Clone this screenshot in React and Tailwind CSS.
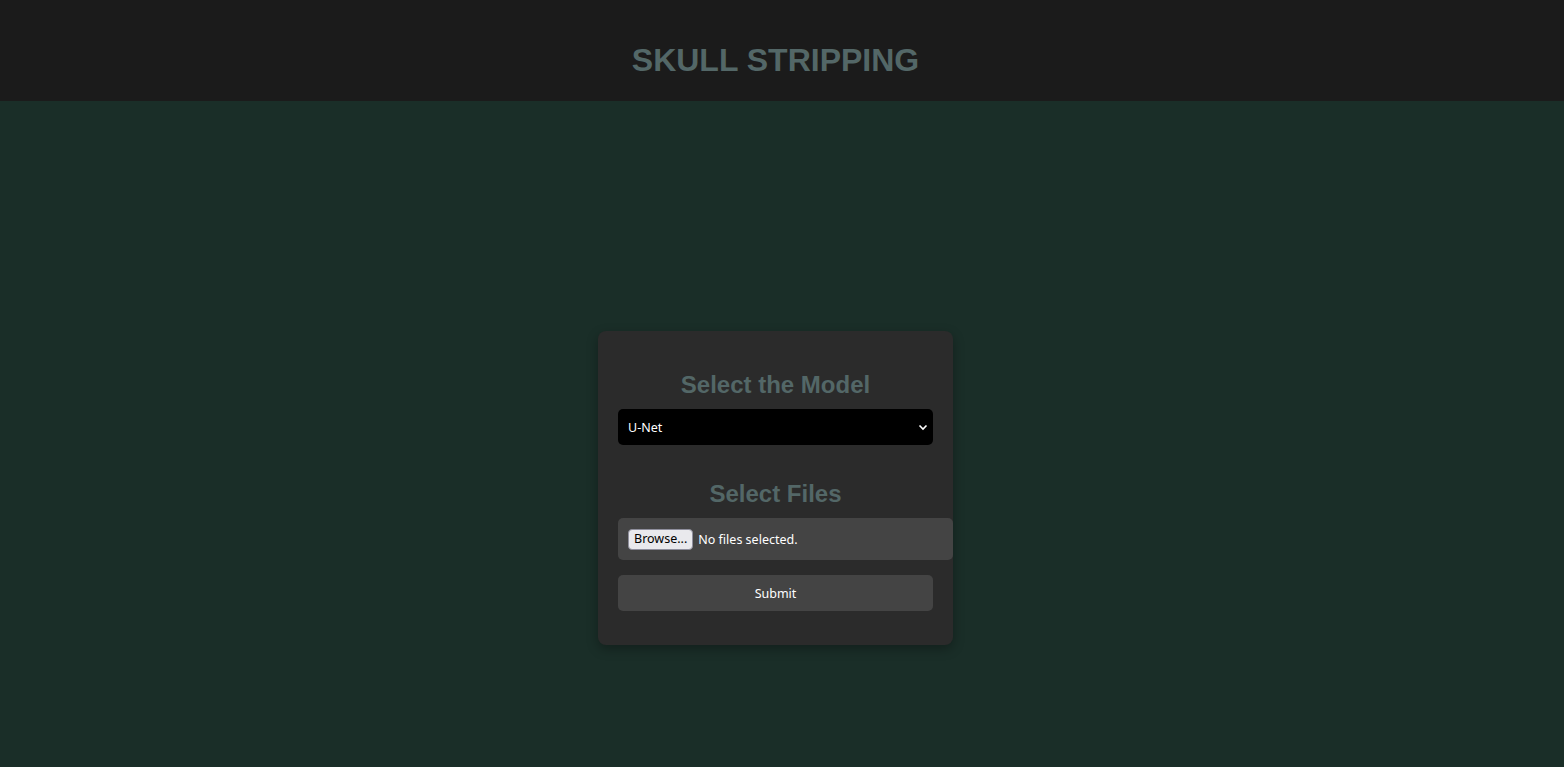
import {useState} from "react";

const Chevron = () => (
    <svg width="10" height="7" viewBox="0 0 10 7" className="pointer-events-none">
        <path d="M1.5 1.5 L5 5 L8.5 1.5" fill="none" stroke="#ffffff" strokeWidth="1.6"/>
    </svg>
)

export default function App() {
    const [model, setModel] = useState("U-Net");

    return (
        <div className="min-h-screen bg-[#1a2e28] font-['Liberation_Sans',Arial,sans-serif]">
            <header className="h-[101px] bg-[#1b1b1b] flex items-center justify-center pt-[18px] pr-[13px]">
                <h1 className="text-[32px] font-bold text-[#536767] leading-none">SKULL STRIPPING</h1>
            </header>
            <main className="flex justify-center pt-[230px] pb-[122px] pr-[13px]">
                <div className="w-[355px] bg-[#2b2b2b] rounded-lg px-5 pt-[19px] pb-[34px] shadow-[0_4px_12px_rgba(0,0,0,0.3)]">
                    <h2 className="text-[24px] font-bold text-[#536767] text-center leading-[28px] mt-[21px]">Select the Model</h2>
                    <div className="relative mt-[10px]">
                        <select
                            value={model}
                            onChange={(e) => setModel(e.target.value)}
                            className="appearance-none w-full h-9 pt-[2px] bg-black text-white rounded-[5px] pl-[10px] text-[12.5px] font-['Noto_Sans',sans-serif] outline-none">
                            <option>U-Net</option>
                        </select>
                        <div className="absolute right-[5px] top-[15px]">
                            <Chevron/>
                        </div>
                    </div>
                    <h2 className="text-[24px] font-bold text-[#536767] text-center leading-[28px] mt-[35px]">Select Files</h2>
                    <div className="mt-[10px] w-[335px] h-[42px] bg-[#444444] rounded-[5px] flex items-center pl-[10px] pt-[1px] gap-[5px] font-['Noto_Sans',sans-serif] text-[12.5px]">
                        <button className="h-[21px] px-[5px] bg-[#e9e9ed] text-black border border-[#8f8f9d] rounded-[4px] leading-none">Browse...</button>
                        <span className="text-white pt-[2px]">No files selected.</span>
                    </div>
                    <button className="mt-[15px] w-full h-9 pt-[3px] bg-[#444444] text-white rounded-[5px] text-[12.5px] font-['Noto_Sans',sans-serif]">Submit</button>
                </div>
            </main>
        </div>
    )
}
